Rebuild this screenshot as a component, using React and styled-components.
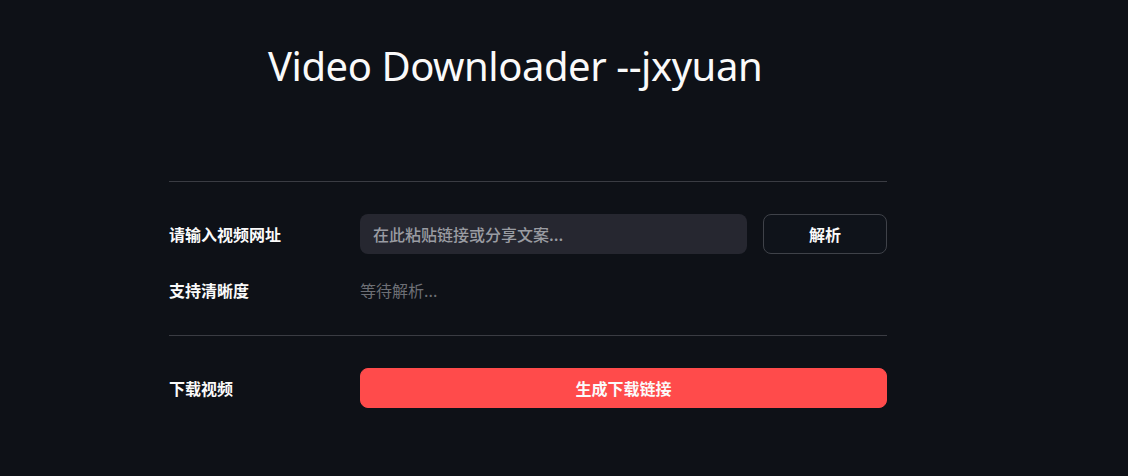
import React from "react";
import styled, { createGlobalStyle } from "styled-components";

const Global = createGlobalStyle`
  html, body {
    margin: 0;
    padding: 0;
    background: #0e1117;
  }
  body {
    font-family: "Noto Sans", "Noto Sans CJK SC", sans-serif;
    color: #fafafa;
  }
`;

const Page = styled.div`
  width: 1128px;
  height: 476px;
  background: #0e1117;
  overflow: hidden;
`;

const Main = styled.div`
  width: 718px;
  margin-left: 169px;
  padding-top: 36px;
`;

const Title = styled.h1`
  margin: 0 0 0 99px;
  font-size: 40px;
  font-weight: 400;
  line-height: 60px;
  color: #fafafa;
  letter-spacing: -0.45px;
`;

const Divider = styled.hr`
  border: none;
  border-top: 1px solid #3a3c43;
  margin: ${(p) => p.$top}px 0 0 0;
`;

const Row = styled.div`
  display: flex;
  align-items: center;
  margin-top: ${(p) => p.$top}px;
  height: 40px;
`;

const Label = styled.div`
  width: 191px;
  flex-shrink: 0;
  font-family: "Noto Sans CJK SC", sans-serif;
  font-size: 16px;
  font-weight: 700;
  color: #fafafa;
`;

const Input = styled.input`
  width: 387px;
  height: 40px;
  box-sizing: border-box;
  border: none;
  outline: none;
  border-radius: 8px;
  background: #262730;
  padding: 0 13px;
  font-family: "Noto Sans CJK SC", sans-serif;
  font-size: 16px;
  font-weight: 500;
  color: #fafafa;
  &::placeholder {
    color: #9a9ca2;
  }
`;

const Button = styled.button`
  height: 40px;
  box-sizing: border-box;
  margin-left: ${(p) => p.$left || 0}px;
  width: ${(p) => p.$width}px;
  border-radius: 8px;
  font-family: "Noto Sans CJK SC", sans-serif;
  font-size: 16px;
  font-weight: 700;
  color: #fafafa;
  cursor: pointer;
  background: ${(p) => (p.$primary ? "#ff4b4b" : "#0f131a")};
  border: 1px solid ${(p) => (p.$primary ? "#ff4b4b" : "#3f4249")};
`;

const Muted = styled.div`
  font-family: "Noto Sans CJK SC", sans-serif;
  font-size: 16px;
  color: #6d6f75;
`;

export default function App() {
  return (
    <Page>
      <Global />
      <Main>
        <Title>Video Downloader --jxyuan</Title>
        <Divider $top={85} />
        <Row $top={32}>
          <Label>请输入视频网址</Label>
          <Input placeholder="在此粘贴链接或分享文案..." />
          <Button $left={16} $width={124}>解析</Button>
        </Row>
        <Row $top={16}>
          <Label>支持清晰度</Label>
          <Muted>等待解析...</Muted>
        </Row>
        <Divider $top={25} />
        <Row $top={32}>
          <Label>下载视频</Label>
          <Button $primary $width={527}>生成下载链接</Button>
        </Row>
      </Main>
    </Page>
  );
}
